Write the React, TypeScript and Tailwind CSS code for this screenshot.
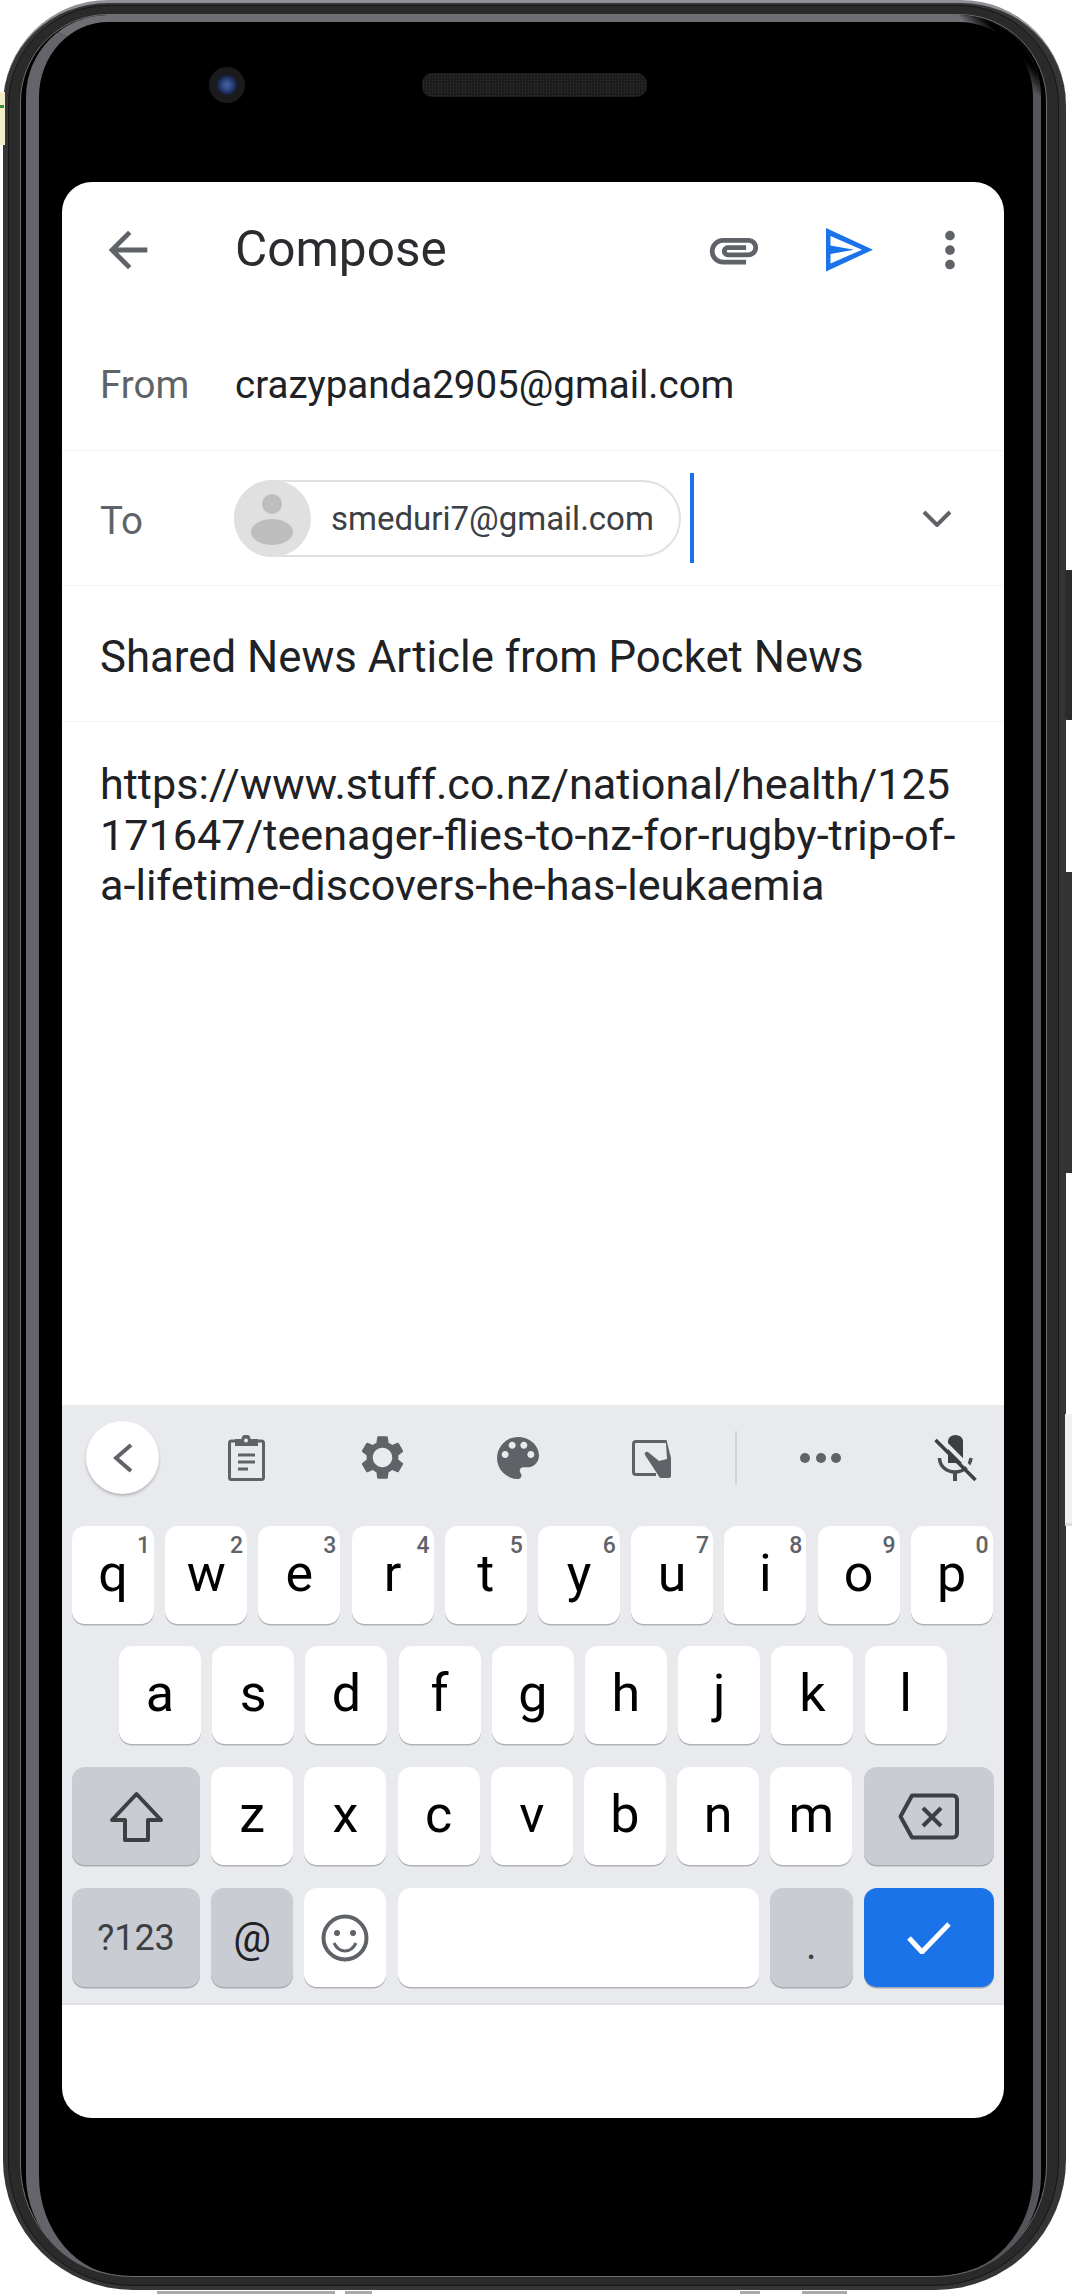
const ROW_1 = [
  ["q", "1"],
  ["w", "2"],
  ["e", "3"],
  ["r", "4"],
  ["t", "5"],
  ["y", "6"],
  ["u", "7"],
  ["i", "8"],
  ["o", "9"],
  ["p", "0"],
];
const ROW_2 = ["a", "s", "d", "f", "g", "h", "j", "k", "l"];
const ROW_3 = ["z", "x", "c", "v", "b", "n", "m"];

function LetterKey({ label, num }: { label: string; num?: string }) {
  return (
    <div className="relative flex h-[98px] w-[82px] shrink-0 items-center justify-center rounded-[13px] bg-white pb-[2px] text-[52px] leading-none text-black shadow-[0_1.5px_0_#b0b2b7]">
      {label}
      {num && <span className="absolute top-[8px] right-[4px] text-[23px] leading-none font-medium text-[#5f6368]">{num}</span>}
    </div>
  );
}

function Header() {
  return (
    <div className="flex h-[136px] shrink-0 items-center pr-[25px] pl-[37px]">
      <svg viewBox="0 0 24 24" className="h-[58px] w-[58px] fill-[#5f6368]">
        <path d="M20 11H7.83l5.59-5.59L12 4l-8 8 8 8 1.41-1.41L7.83 13H20v-2z" />
      </svg>
      <span className="ml-[78px] text-[49.5px] leading-none text-[#2a2c2f]">Compose</span>
      <svg viewBox="0 0 24 24" className="ml-auto h-[58px] w-[58px] fill-[#5f6368]">
        <path d="M2 12.5C2 9.46 4.46 7 7.5 7H18c2.21 0 4 1.79 4 4s-1.79 4-4 4H9.5C8.12 15 7 13.88 7 12.5S8.12 10 9.5 10H17v2H9.41c-.55 0-.55 1 0 1H18c1.1 0 2-.9 2-2s-.9-2-2-2H7.5C5.57 9 4 10.57 4 12.5S5.57 16 7.5 16H17v2H7.5C4.46 18 2 15.54 2 12.5z" />
      </svg>
      <svg viewBox="0 0 48 44" className="ml-[62px] h-[44px] w-[48px] fill-[#1a73e8]">
        <path fillRule="evenodd" d="M1 0L48 21.7 1 43.4zM5.5 8v9.5L29 21.7 5.5 26v9.5L37 21.7z" />
      </svg>
      <svg viewBox="0 0 24 24" className="ml-[48px] h-[58px] w-[58px] fill-[#5f6368]">
        <path d="M12 8c1.1 0 2-.9 2-2s-.9-2-2-2-2 .9-2 2 .9 2 2 2zm0 2c-1.1 0-2 .9-2 2s.9 2 2 2 2-.9 2-2-.9-2-2-2zm0 6c-1.1 0-2 .9-2 2s.9 2 2 2 2-.9 2-2-.9-2-2-2z" />
      </svg>
    </div>
  );
}

function Fields() {
  return (
    <>
      <div className="flex h-[133px] shrink-0 items-center border-b-[1.5px] border-[#f1f3f4] pt-[2px] pl-[38px] text-[38.5px]">
        <span className="w-[135px] text-[#5f6368]">From</span>
        <span className="text-[#202124]">crazypanda2905@gmail.com</span>
      </div>
      <div className="flex h-[135px] shrink-0 items-center border-b-[1.5px] border-[#f1f3f4] pl-[38px] text-[38.5px]">
        <span className="w-[134px] pt-[5px] text-[#5f6368]">To</span>
        <div className="flex h-[77px] w-[447px] items-center rounded-full border-[2px] border-[#e0e0e0]">
          <svg viewBox="0 0 77 77" className="-ml-[2px] h-[77px] w-[77px] shrink-0">
            <circle cx="38.5" cy="38.5" r="38.5" fill="#e0e0e0" />
            <circle cx="38" cy="24" r="10" fill="#bdbdbd" />
            <ellipse cx="38" cy="52" rx="21" ry="13" fill="#bdbdbd" />
          </svg>
          <span className="ml-[20px] text-[33px] leading-none text-[#3c4043]">smeduri7@gmail.com</span>
        </div>
        <div className="ml-[9px] h-[90px] w-[4px] bg-[#1a73e8]" />
        <svg viewBox="0 0 30 17" className="ml-[228px] h-[17px] w-[30px] fill-none stroke-[#5f6368] stroke-[4]">
          <path d="M2 2l13 13L28 2" />
        </svg>
      </div>
      <div className="flex h-[136px] shrink-0 items-center border-b-[1.5px] border-[#f1f3f4] pt-[9px] pl-[38px] text-[43.75px] text-[#202124]">
        Shared News Article from Pocket News
      </div>
      <div className="flex-1 pt-[38px] pl-[38px] text-[43.15px] leading-[50.5px] whitespace-nowrap text-[#202124]">
        <div>https://www.stuff.co.nz/national/health/125</div>
        <div>171647/teenager-flies-to-nz-for-rugby-trip-of-</div>
        <div>a-lifetime-discovers-he-has-leukaemia</div>
      </div>
    </>
  );
}

function Toolbar() {
  return (
    <div className="flex h-[121px] shrink-0 pt-[16px] pl-[24px]">
      <div className="flex h-[73px] items-center">
        <div className="flex h-[73px] w-[73px] items-center justify-center rounded-full bg-white shadow-[0_2px_3px_#b5b6ba]">
          <svg viewBox="0 0 20 30" className="h-[30px] w-[20px] fill-none stroke-[#5f6368] stroke-[4]">
            <path d="M18 2L3 15l15 13" />
          </svg>
        </div>
        <svg viewBox="0 0 37 46" className="ml-[69px] h-[46px] w-[37px] fill-none">
          <rect x="1.5" y="6" width="34" height="38.5" rx="2" stroke="#5f6368" strokeWidth="3" />
          <path d="M7 4h6.5a4.5 4.5 0 0 1 9 0H30v7H7z" fill="#5f6368" />
          <circle cx="18" cy="5.5" r="2" fill="#e8eaed" />
          <path d="M10 20h17M10 27h17M10 34h10" stroke="#5f6368" strokeWidth="3.2" />
        </svg>
        <svg viewBox="0 0 24 24" className="ml-[91px] h-[53px] w-[53px] fill-[#5f6368]">
          <path d="M19.14 12.94c.04-.3.06-.61.06-.94 0-.32-.02-.64-.07-.94l2.03-1.58c.18-.14.23-.41.12-.61l-1.92-3.32c-.12-.22-.37-.29-.59-.22l-2.39.96c-.5-.38-1.03-.7-1.62-.94l-.36-2.54c-.04-.24-.24-.41-.48-.41h-3.84c-.24 0-.43.17-.47.41l-.36 2.54c-.59.24-1.13.57-1.62.94l-2.39-.96c-.22-.08-.47 0-.59.22L2.74 8.87c-.12.21-.08.47.12.61l2.03 1.58c-.05.3-.09.63-.09.94s.02.64.07.94l-2.03 1.58c-.18.14-.23.41-.12.61l1.92 3.32c.12.22.37.29.59.22l2.39-.96c.5.38 1.03.7 1.62.94l.36 2.54c.05.24.24.41.48.41h3.84c.24 0 .44-.17.47-.41l.36-2.54c.59-.24 1.13-.56 1.62-.94l2.39.96c.22.08.47 0 .59-.22l1.92-3.32c.12-.22.07-.47-.12-.61l-2.01-1.58zM12 16.4c-2.42 0-4.4-1.98-4.4-4.4s1.98-4.4 4.4-4.4 4.4 1.98 4.4 4.4-1.98 4.4-4.4 4.4z" />
        </svg>
        <svg viewBox="0 0 24 24" className="ml-[81px] h-[56px] w-[56px] fill-[#5f6368]">
          <path d="M12 3a9 9 0 0 0 0 18c.83 0 1.5-.67 1.5-1.5 0-.39-.15-.74-.39-1.01-.23-.26-.38-.61-.38-.99 0-.83.67-1.5 1.5-1.5H16c2.76 0 5-2.24 5-5 0-4.42-4.03-8-9-8zm-5.5 9c-.83 0-1.5-.67-1.5-1.5S5.67 9 6.5 9 8 9.67 8 10.5 7.33 12 6.5 12zm3-4C8.67 8 8 7.33 8 6.5S8.67 5 9.5 5s1.5.67 1.5 1.5S10.33 8 9.5 8zm5 0c-.83 0-1.5-.67-1.5-1.5S13.67 5 14.5 5s1.5.67 1.5 1.5S15.33 8 14.5 8zm3 4c-.83 0-1.5-.67-1.5-1.5S16.67 9 17.5 9s1.5.67 1.5 1.5-.67 1.5-1.5 1.5z" />
        </svg>
        <svg viewBox="0 0 40 40" className="ml-[86px] h-[40px] w-[40px]">
          <path d="M34 3.5H4A2.5 2.5 0 0 0 1.5 6v28A2.5 2.5 0 0 0 4 36.5h20" fill="none" stroke="#5f6368" strokeWidth="3" />
          <path d="M33 2h1.5L39 20v18a2 2 0 0 1-2 2h-9L13 17c-1-2 1-4 3-3l11 9 8-2-1-15z" fill="#5f6368" />
        </svg>
        <div className="ml-[63px] h-[53px] w-[2px] bg-[#d2d3d6]" />
        <div className="ml-[63px] flex w-[41px] justify-between">
          <div className="h-[10px] w-[10px] rounded-full bg-[#5f6368]" />
          <div className="h-[10px] w-[10px] rounded-full bg-[#5f6368]" />
          <div className="h-[10px] w-[10px] rounded-full bg-[#5f6368]" />
        </div>
        <svg viewBox="0 0 43 46" className="ml-[93px] h-[46px] w-[43px] fill-none">
          <path d="M14 6a7.5 6 0 0 1 15 0v22H14z" fill="#3c4043" />
          <path d="M5.5 23c0 8 7 14 15.5 14s15-6 16-14" stroke="#4a4d50" strokeWidth="3.5" />
          <path d="M21 37v9" stroke="#4a4d50" strokeWidth="4" />
          <path d="M7 4l36 36" stroke="#e8eaed" strokeWidth="4" />
          <path d="M1.5 5l40 40" stroke="#3c4043" strokeWidth="3.5" />
        </svg>
      </div>
    </div>
  );
}

function Keyboard() {
  return (
    <div className="flex h-[600px] shrink-0 flex-col border-b-[2px] border-[#dfe1e5] bg-[#e8eaed]">
      <Toolbar />
      <div className="flex gap-[11.2px] pl-[10px]">
        {ROW_1.map(([k, n]) => (
          <LetterKey key={k} label={k} num={n} />
        ))}
      </div>
      <div className="mt-[22px] flex gap-[11.2px] pl-[57px]">
        {ROW_2.map((k) => (
          <LetterKey key={k} label={k} />
        ))}
      </div>
      <div className="mt-[23px] flex gap-[11.2px] pl-[10px]">
        <div className="flex h-[98px] w-[128px] shrink-0 items-center justify-center rounded-[13px] bg-[#c9ccd3] shadow-[0_1.5px_0_#a8aab0]">
          <svg viewBox="0 0 53 51" className="h-[51px] w-[53px] fill-none stroke-[#3c4043] stroke-[4]">
            <path d="M26.5 3L51 29H38v20H15V29H2z" strokeLinejoin="round" />
          </svg>
        </div>
        {ROW_3.map((k) => (
          <LetterKey key={k} label={k} />
        ))}
        <div className="flex h-[98px] w-[130px] shrink-0 items-center justify-center rounded-[13px] bg-[#c9ccd3] shadow-[0_1.5px_0_#a8aab0]">
          <svg viewBox="0 0 61 47" className="h-[47px] w-[61px] fill-none stroke-[#3c4043] stroke-[4]">
            <path d="M14 2.5h41a4 4 0 0 1 4 4v34a4 4 0 0 1-4 4H14L2.5 23.5z" strokeLinejoin="round" />
            <path d="M25 15l18 18M43 15L25 33" />
          </svg>
        </div>
      </div>
      <div className="mt-[23px] flex gap-[11.2px] pl-[10px]">
        <div className="flex h-[99px] w-[128px] shrink-0 items-center justify-center rounded-[13px] bg-[#c9ccd3] text-[36px] leading-none text-[#3c4043] shadow-[0_1.5px_0_#a8aab0]">
          ?123
        </div>
        <div className="flex h-[99px] w-[82px] shrink-0 items-center justify-center rounded-[13px] bg-[#c9ccd3] text-[42px] leading-none text-[#202124] shadow-[0_1.5px_0_#a8aab0]">
          @
        </div>
        <div className="flex h-[99px] w-[82px] shrink-0 items-center justify-center rounded-[13px] bg-white shadow-[0_1.5px_0_#b0b2b7]">
          <svg viewBox="0 0 48 48" className="h-[48px] w-[48px] fill-none stroke-[#5f6368]">
            <circle cx="24" cy="24" r="21.5" strokeWidth="4" />
            <circle cx="16" cy="19" r="3" fill="#5f6368" stroke="none" />
            <circle cx="32" cy="19" r="3" fill="#5f6368" stroke="none" />
            <path d="M13 29c3 6 6.5 8 11 8s8-2 11-8" strokeWidth="3" />
          </svg>
        </div>
        <div className="h-[99px] w-[361px] shrink-0 rounded-[13px] bg-white shadow-[0_1.5px_0_#b0b2b7]" />
        <div className="flex h-[99px] w-[83px] shrink-0 items-start justify-center rounded-[13px] bg-[#c9ccd3] pt-[38px] text-[40px] leading-none text-[#3c4043] shadow-[0_1.5px_0_#a8aab0]">
          .
        </div>
        <div className="flex h-[99px] w-[130px] shrink-0 items-center justify-center rounded-[13px] bg-[#1a73e8] shadow-[0_1.5px_0_#a8aab0]">
          <svg viewBox="0 0 44 32" className="h-[32px] w-[44px] fill-none stroke-white stroke-[5]">
            <path d="M2 16l13 14L42 2" />
          </svg>
        </div>
      </div>
    </div>
  );
}

export default function App() {
  return (
    <div className="relative h-[2294px] w-[1072px] overflow-hidden bg-white font-['Roboto',sans-serif]">
      {/* stray bits of the page behind the phone mockup */}
      <div className="absolute top-[92px] left-0 h-[53px] w-[5px] bg-[#f3ecc9]" />
      <div className="absolute top-[105px] left-0 h-[3px] w-[4px] bg-[#3f8f3a]" />
      <div className="absolute top-[1414px] right-0 h-[112px] w-[7px] border-b-[3px] border-[#dcdcdc] bg-[#f1f1f1]" />
      <div className="absolute top-[2291px] left-[157px] h-[3px] w-[178px] bg-[#a9a9a9]" />
      <div className="absolute top-[2291px] left-[345px] h-[3px] w-[27px] bg-[#a9a9a9]" />
      <div className="absolute top-[2291px] left-[740px] h-[3px] w-[20px] bg-[#a9a9a9]" />
      <div className="absolute top-[2291px] left-[802px] h-[3px] w-[45px] bg-[#a9a9a9]" />

      {/* side buttons */}
      <div className="absolute top-[570px] right-0 h-[150px] w-[7px] rounded-l-[2px] bg-[#2b2b2b]" />
      <div className="absolute top-[872px] right-0 h-[301px] w-[8px] rounded-l-[2px] bg-[#333336]" />

      {/* phone body: outer rim, groove, inner rim, glass */}
      <div className="ml-[3px] h-[2290px] w-[1063px] rounded-t-[105px] rounded-b-[130px] border-t-[3px] border-t-[#8f9196] bg-[#363434] pt-[2px] pr-[7px] pb-[4px] pl-[5px]">
        <div className="h-full rounded-t-[100px] rounded-b-[125px] border border-[#161616] bg-[#2a2a2a] pt-[8px] pr-[11px] pb-[8px] pl-[11px]">
          <div className="h-full rounded-t-[88px] rounded-b-[112px] border border-[#6e6e70] bg-black px-[5px]">
            <div className="relative flex h-full flex-col rounded-t-[82px] rounded-b-[100px] border-t-[7px] border-r-[8px] border-l-[13px] border-t-[#6d6f74] border-r-[#55565b] border-l-[#63656a]">
              {/* glare breaks off around the top right corner */}
              <div className="absolute -top-[7px] -right-[8px] h-[100px] w-[100px] rounded-tr-[82px] bg-[linear-gradient(225deg,#000_30%,transparent_42%)]" />
              <div className="mt-[45px] mb-[79px] flex h-[36px] shrink-0 items-center">
                <div className="ml-[170px] flex h-[36px] w-[36px] items-center justify-center rounded-full bg-[#1b1b1d]">
                  <div className="h-[20px] w-[20px] rounded-full bg-[radial-gradient(circle,#3f5a9a_15%,#14204a_70%)]" />
                </div>
                <div className="ml-[177px] h-[24px] w-[225px] rounded-[10px] bg-[#1c1c1c] bg-[radial-gradient(#343434_1px,transparent_1px)] bg-[length:3px_3px]" />
              </div>
              <div className="mr-[29px] ml-[23px] flex h-[1936px] shrink-0 flex-col overflow-hidden rounded-[30px] bg-white">
                <Header />
                <Fields />
                <Keyboard />
                <div className="h-[113px] shrink-0" />
              </div>
            </div>
          </div>
        </div>
      </div>
    </div>
  );
}
